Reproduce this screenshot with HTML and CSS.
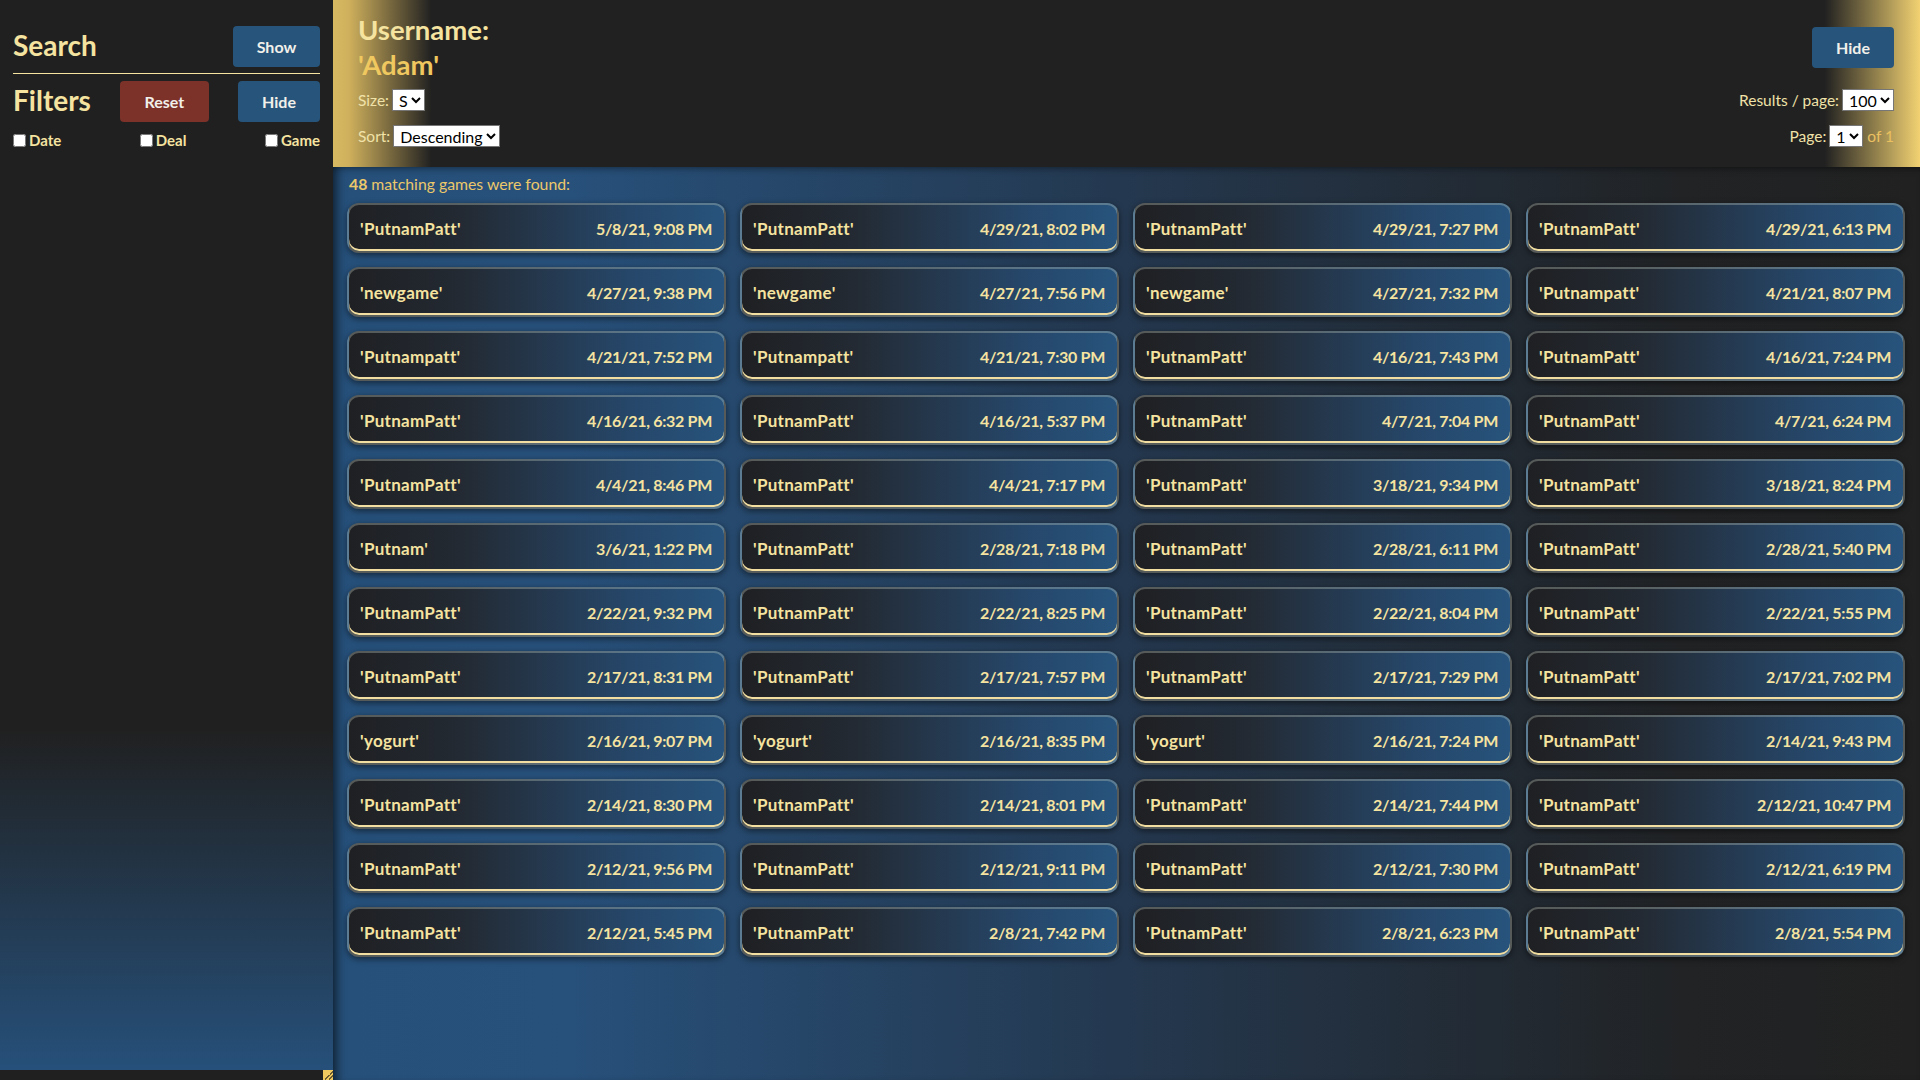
FILE: index.html
```html
<!DOCTYPE html>
<html lang="en">
<head>
<meta charset="utf-8">
<title>Game Search</title>
<link rel="stylesheet" href="styles.css">
</head>
<body>
<div class="app">
  <aside class="sidebar">
    <div class="sidebar-body">
      <div class="side-row">
        <h2 class="side-title">Search</h2>
        <button class="btn btn-blue btn-show">Show</button>
      </div>
      <hr class="side-rule">
      <div class="side-row">
        <h2 class="side-title">Filters</h2>
        <button class="btn btn-red btn-reset">Reset</button>
        <button class="btn btn-blue btn-hide">Hide</button>
      </div>
      <div class="check-row">
        <label class="check"><input type="checkbox">Date</label>
        <label class="check"><input type="checkbox">Deal</label>
        <label class="check"><input type="checkbox">Game</label>
      </div>
    </div>
    <div class="sidebar-foot"><span class="grip"></span></div>
  </aside>
  <main class="main">
    <header class="header">
      <div class="head-left">
        <h1 class="user-title">Username:<br><span class="user-name">'Adam'</span></h1>
        <div class="field field-size"><span class="field-label">Size:</span><select class="sel"><option>S</option></select></div>
        <div class="field field-sort"><span class="field-label">Sort:</span><select class="sel"><option>Descending</option></select></div>
      </div>
      <div class="head-right">
        <button class="btn btn-blue btn-hide">Hide</button>
        <div class="field field-rpp"><span class="field-label">Results / page:</span><select class="sel"><option>100</option></select></div>
        <div class="field field-page"><span class="field-label">Page:</span><select class="sel"><option>1</option></select><span class="of">of 1</span></div>
      </div>
    </header>
    <section class="results">
      <p class="found"><b>48</b> matching games were found:</p>
      <div class="grid">
        <div class="card"><span class="nm">'PutnamPatt'</span><span class="dt">5/8/21, 9:08 PM</span></div>
        <div class="card"><span class="nm">'PutnamPatt'</span><span class="dt">4/29/21, 8:02 PM</span></div>
        <div class="card"><span class="nm">'PutnamPatt'</span><span class="dt">4/29/21, 7:27 PM</span></div>
        <div class="card"><span class="nm">'PutnamPatt'</span><span class="dt">4/29/21, 6:13 PM</span></div>
        <div class="card"><span class="nm">'newgame'</span><span class="dt">4/27/21, 9:38 PM</span></div>
        <div class="card"><span class="nm">'newgame'</span><span class="dt">4/27/21, 7:56 PM</span></div>
        <div class="card"><span class="nm">'newgame'</span><span class="dt">4/27/21, 7:32 PM</span></div>
        <div class="card"><span class="nm">'Putnampatt'</span><span class="dt">4/21/21, 8:07 PM</span></div>
        <div class="card"><span class="nm">'Putnampatt'</span><span class="dt">4/21/21, 7:52 PM</span></div>
        <div class="card"><span class="nm">'Putnampatt'</span><span class="dt">4/21/21, 7:30 PM</span></div>
        <div class="card"><span class="nm">'PutnamPatt'</span><span class="dt">4/16/21, 7:43 PM</span></div>
        <div class="card"><span class="nm">'PutnamPatt'</span><span class="dt">4/16/21, 7:24 PM</span></div>
        <div class="card"><span class="nm">'PutnamPatt'</span><span class="dt">4/16/21, 6:32 PM</span></div>
        <div class="card"><span class="nm">'PutnamPatt'</span><span class="dt">4/16/21, 5:37 PM</span></div>
        <div class="card"><span class="nm">'PutnamPatt'</span><span class="dt">4/7/21, 7:04 PM</span></div>
        <div class="card"><span class="nm">'PutnamPatt'</span><span class="dt">4/7/21, 6:24 PM</span></div>
        <div class="card"><span class="nm">'PutnamPatt'</span><span class="dt">4/4/21, 8:46 PM</span></div>
        <div class="card"><span class="nm">'PutnamPatt'</span><span class="dt">4/4/21, 7:17 PM</span></div>
        <div class="card"><span class="nm">'PutnamPatt'</span><span class="dt">3/18/21, 9:34 PM</span></div>
        <div class="card"><span class="nm">'PutnamPatt'</span><span class="dt">3/18/21, 8:24 PM</span></div>
        <div class="card"><span class="nm">'Putnam'</span><span class="dt">3/6/21, 1:22 PM</span></div>
        <div class="card"><span class="nm">'PutnamPatt'</span><span class="dt">2/28/21, 7:18 PM</span></div>
        <div class="card"><span class="nm">'PutnamPatt'</span><span class="dt">2/28/21, 6:11 PM</span></div>
        <div class="card"><span class="nm">'PutnamPatt'</span><span class="dt">2/28/21, 5:40 PM</span></div>
        <div class="card"><span class="nm">'PutnamPatt'</span><span class="dt">2/22/21, 9:32 PM</span></div>
        <div class="card"><span class="nm">'PutnamPatt'</span><span class="dt">2/22/21, 8:25 PM</span></div>
        <div class="card"><span class="nm">'PutnamPatt'</span><span class="dt">2/22/21, 8:04 PM</span></div>
        <div class="card"><span class="nm">'PutnamPatt'</span><span class="dt">2/22/21, 5:55 PM</span></div>
        <div class="card"><span class="nm">'PutnamPatt'</span><span class="dt">2/17/21, 8:31 PM</span></div>
        <div class="card"><span class="nm">'PutnamPatt'</span><span class="dt">2/17/21, 7:57 PM</span></div>
        <div class="card"><span class="nm">'PutnamPatt'</span><span class="dt">2/17/21, 7:29 PM</span></div>
        <div class="card"><span class="nm">'PutnamPatt'</span><span class="dt">2/17/21, 7:02 PM</span></div>
        <div class="card"><span class="nm">'yogurt'</span><span class="dt">2/16/21, 9:07 PM</span></div>
        <div class="card"><span class="nm">'yogurt'</span><span class="dt">2/16/21, 8:35 PM</span></div>
        <div class="card"><span class="nm">'yogurt'</span><span class="dt">2/16/21, 7:24 PM</span></div>
        <div class="card"><span class="nm">'PutnamPatt'</span><span class="dt">2/14/21, 9:43 PM</span></div>
        <div class="card"><span class="nm">'PutnamPatt'</span><span class="dt">2/14/21, 8:30 PM</span></div>
        <div class="card"><span class="nm">'PutnamPatt'</span><span class="dt">2/14/21, 8:01 PM</span></div>
        <div class="card"><span class="nm">'PutnamPatt'</span><span class="dt">2/14/21, 7:44 PM</span></div>
        <div class="card"><span class="nm">'PutnamPatt'</span><span class="dt">2/12/21, 10:47 PM</span></div>
        <div class="card"><span class="nm">'PutnamPatt'</span><span class="dt">2/12/21, 9:56 PM</span></div>
        <div class="card"><span class="nm">'PutnamPatt'</span><span class="dt">2/12/21, 9:11 PM</span></div>
        <div class="card"><span class="nm">'PutnamPatt'</span><span class="dt">2/12/21, 7:30 PM</span></div>
        <div class="card"><span class="nm">'PutnamPatt'</span><span class="dt">2/12/21, 6:19 PM</span></div>
        <div class="card"><span class="nm">'PutnamPatt'</span><span class="dt">2/12/21, 5:45 PM</span></div>
        <div class="card"><span class="nm">'PutnamPatt'</span><span class="dt">2/8/21, 7:42 PM</span></div>
        <div class="card"><span class="nm">'PutnamPatt'</span><span class="dt">2/8/21, 6:23 PM</span></div>
        <div class="card"><span class="nm">'PutnamPatt'</span><span class="dt">2/8/21, 5:54 PM</span></div>
      </div>
    </section>
  </main>
</div>
</body>
</html>
```
FILE: styles.css
```css
* { box-sizing: border-box; }
html, body {
  margin: 0;
  height: 100%;
  background: #202020;
  font-family: Lato, "Open Sans", "Liberation Sans", sans-serif;
  color: #f5e3a0;
  overflow: hidden;
}
.app {
  display: flex;
  height: 100vh;
}

/* Sidebar */
.sidebar {
  width: 333px;
  flex: 0 0 333px;
  display: flex;
  flex-direction: column;
}
.sidebar-body {
  flex: 1;
  padding: 26px 13px 0 13px;
  background: linear-gradient(to bottom, #202020 0%, #202020 68%, #26507a 100%);
}
.sidebar-foot {
  height: 10px;
  background: #202020;
  display: flex;
  justify-content: flex-end;
}
.grip {
  width: 10px;
  height: 10px;
  background:
    linear-gradient(135deg, transparent 55%, #6a5a30 55%, #6a5a30 62%, transparent 62%, transparent 75%, #6a5a30 75%, #6a5a30 82%, transparent 82%),
    #f0c860;
}
.side-row {
  display: flex;
  align-items: center;
  justify-content: space-between;
}
.side-title {
  margin: 0 0 2px 0;
  font-size: 28px;
  font-weight: 700;
  line-height: 39px;
  color: #f5e3a0;
}
.side-rule {
  margin: 6px 0 7px 0;
  border: 0;
  border-top: 1px solid #f5e3a0;
  height: 0;
}
.btn {
  font-family: Lato, "Open Sans", "Liberation Sans", sans-serif;
  font-size: 16px;
  font-weight: 700;
  line-height: 19px;
  color: #f2f0ea;
  border: 0;
  border-radius: 4px;
  padding: 11px 0;
  text-align: center;
}
.btn-blue { background: #27547a; }
.btn-red { background: #7c3129; }
.btn-show { width: 87px; }
.btn-reset { width: 89px; }
.btn-hide { width: 82px; }
.check-row {
  display: flex;
  justify-content: space-between;
  margin-top: 9px;
}
.check {
  display: flex;
  align-items: center;
  font-size: 15px;
  font-weight: 700;
  color: #f5e3a0;
}
.check input {
  width: 13px;
  height: 13px;
  margin: 0 3px 0 0;
}

/* Main */
.main {
  flex: 1;
  display: flex;
  flex-direction: column;
  min-width: 0;
}
.header {
  height: 167px;
  flex: 0 0 167px;
  display: flex;
  justify-content: space-between;
  padding: 0 26px 0 25px;
  background: linear-gradient(to right, #d7b962 0%, #cfb05c 1%, #212121 6.2%, #212121 94%, #f2d272 100%);
}
.head-left, .head-right {
  display: flex;
  flex-direction: column;
}
.head-right { align-items: flex-end; }
.user-title {
  margin: 12px 0 0 0;
  font-size: 27.5px;
  font-weight: 700;
  line-height: 35px;
  color: #f5e3a0;
}
.user-name { color: #f0c860; }
.field {
  display: flex;
  align-items: center;
  height: 22px;
}
.field-size { margin-top: 7px; }
.field-sort { margin-top: 14px; }
.head-right .btn-hide { margin-top: 27px; }
.field-rpp { margin-top: 21px; }
.field-page { margin-top: 14px; }
.field-label {
  font-size: 15.5px;
  color: #f0e2a8;
  margin-right: 3px;
}
.sel {
  font-family: Lato, "Open Sans", "Liberation Sans", sans-serif;
  font-size: 16px;
  height: 22px;
  padding: 0 0 0 2px;
  border: 1px solid #767676;
  background: #ffffff;
  color: #000;
}
.of {
  font-size: 15.5px;
  color: #eac060;
  margin-left: 4px;
}

/* Results */
.results {
  flex: 1;
  padding: 0 15px 0 14px;
  background: linear-gradient(to right, #26507a 0%, #27507a 15%, #24384f 50%, #212325 85%, #212121 100%);
  box-shadow: inset 10px 0 10px -6px rgba(0, 0, 0, 0.55), inset 0 6px 8px -6px rgba(0,0,0,0.5);
}
.found {
  margin: 0;
  padding: 7px 0 0 2px;
  height: 36px;
  font-size: 15.8px;
  line-height: 19px;
  color: #ecc86a;
}
.found b { font-weight: 700; }
.grid {
  display: grid;
  grid-template-columns: repeat(4, 1fr);
  column-gap: 14px;
  row-gap: 14px;
}
.card {
  height: 50px;
  display: flex;
  align-items: center;
  justify-content: space-between;
  padding: 0 12px 0 11px;
  border: 2px solid rgba(190, 200, 190, 0.35);
  border-radius: 12px;
  background: linear-gradient(to right, #1f2023 0%, #232a33 30%, #26476a 75%, #27537c 100%);
  box-shadow: inset 0 -2px 0 #f2dea0, 0 2px 6px rgba(0, 0, 0, 0.5);
  font-weight: 700;
  color: #f5e3a0;
}
.nm {
  font-size: 17px;
  letter-spacing: 0.3px;
}
.dt {
  font-size: 16px;
  letter-spacing: -0.3px;
}
```
